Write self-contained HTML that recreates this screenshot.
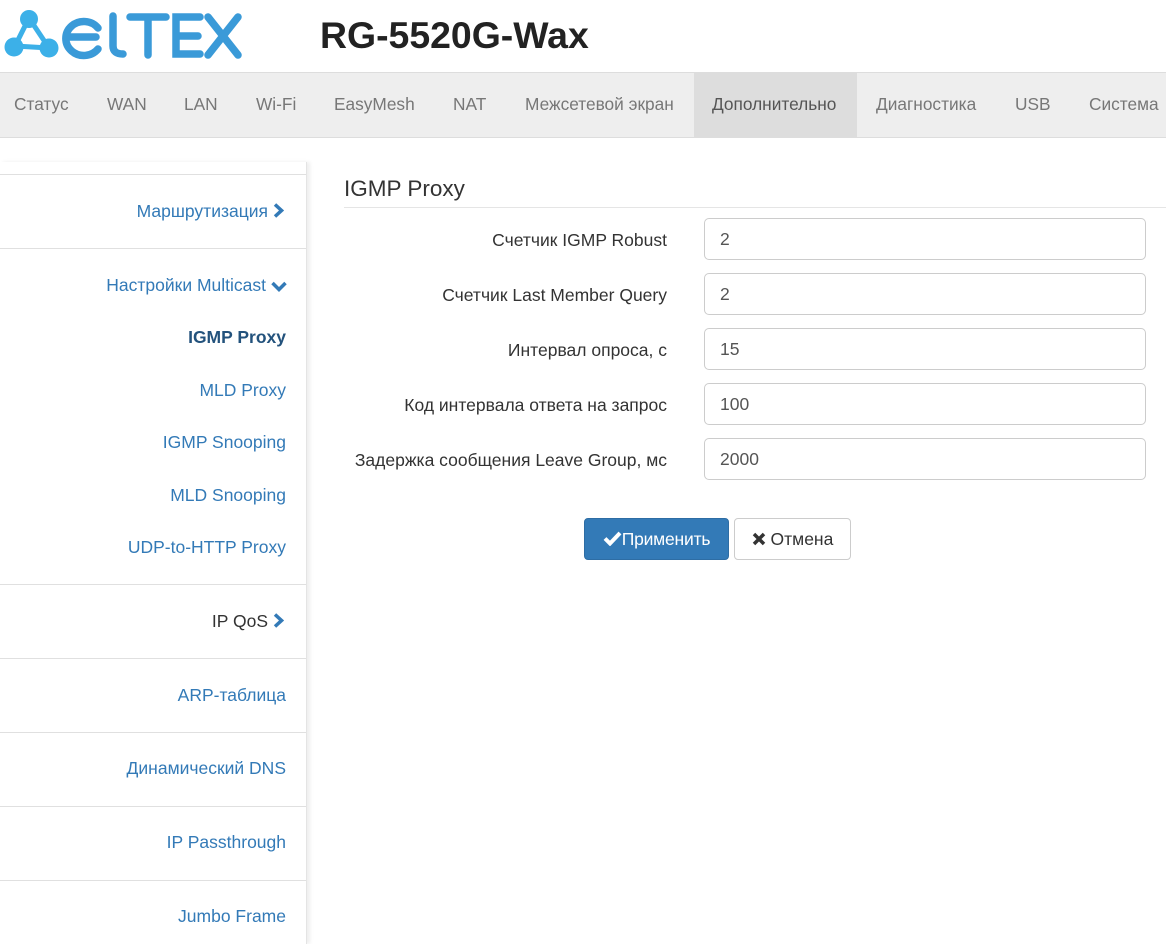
<!DOCTYPE html>
<html><head><meta charset="utf-8"><style>
*{box-sizing:border-box;margin:0;padding:0}
body{width:1166px;height:944px;overflow:hidden;background:#fff;font-family:"Liberation Sans",sans-serif;position:relative}
.hdr{height:73px;border-bottom:1px solid #ddd;position:relative}
.title{position:absolute;left:320px;top:14px;font-size:37.4px;font-weight:bold;color:#222}
.nav{position:absolute;top:73px;left:0;width:1166px;height:65px;background:#eee;border-bottom:1px solid #ddd}
.nav span{position:absolute;top:0;height:64px;line-height:63px;font-size:17.3px;color:#777}
.side{position:absolute;left:0;top:162px;width:307px;height:782px;border-right:1px solid #e4e4e4;box-shadow:3px 0 4px #eee}
.side .ln{position:absolute;left:0;width:306px;border-top:1px solid #e0e0e0}
.side a{position:absolute;right:19px;font-size:17.5px;color:#337ab7;text-decoration:none;white-space:nowrap}
.side a.b{color:#23527c;font-weight:bold}
.side svg{vertical-align:-1px;margin-left:5px}
h3{position:absolute;left:344px;top:176px;font-size:22.5px;font-weight:normal;color:#333}
.hl{position:absolute;left:344px;top:207px;width:822px;border-top:1px solid #e5e5e5}
.lab{position:absolute;right:499px;font-size:17.5px;color:#333}
.inp{position:absolute;left:704px;width:442px;height:42px;border:1px solid #ccc;border-radius:5px;padding-left:15px;line-height:40px;font-size:17.5px;color:#555}
.btn{position:absolute;top:518px;height:42px;border-radius:4px;font-size:17.5px;line-height:40px;text-align:center}
</style></head><body>
<div class="hdr">
<svg width="250" height="70" style="position:absolute;left:0;top:0">
<g stroke="#3cb0e8" stroke-width="5" fill="none"><line x1="29" y1="18" x2="15" y2="46"/><line x1="29" y1="18" x2="49" y2="48"/><line x1="15" y1="46" x2="49" y2="48"/></g>
<g fill="#3cb0e8"><circle cx="29" cy="19" r="9"/><circle cx="14" cy="47" r="9.5"/><circle cx="49" cy="48" r="9.5"/></g>
<g stroke="#3a9ad8" stroke-width="7.5" fill="none" stroke-linecap="round">
<path d="M98 28 A18 17 0 1 0 98 49 M70 37 H96"/>
<path d="M113 16 V46 Q113 54 123 54"/>
<path d="M130 17 H166 M148 17 V55"/>
<path d="M200 17 H176 V54 H200 M176 36 H198"/>
<path d="M208 17 L238 55 M238 17 L208 55"/>
</g></svg>
<div class="title">RG-5520G-Wax</div>
</div>
<div class="nav">
<div style="position:absolute;left:694px;top:0;width:163px;height:64px;background:#ddd"></div>
<span style="left:14px">Статус</span><span style="left:107px">WAN</span><span style="left:184px">LAN</span><span style="left:256px">Wi-Fi</span><span style="left:334px">EasyMesh</span><span style="left:453px">NAT</span><span style="left:525px">Межсетевой экран</span><span style="left:712px;color:#555">Дополнительно</span><span style="left:876px">Диагностика</span><span style="left:1015px">USB</span><span style="left:1089px">Система</span>
</div>
<div class="side">
<div class="ln" style="top:12px"></div><div class="ln" style="top:86px"></div><div class="ln" style="top:422px"></div><div class="ln" style="top:496px"></div><div class="ln" style="top:570px"></div><div class="ln" style="top:644px"></div><div class="ln" style="top:718px"></div>
<a style="top:39px;right:22px">Маршрутизация<svg width="11" height="15" viewBox="0 0 11 15"><path d="M2 1.5 L8.5 7.5 L2 13.5" stroke="#337ab7" stroke-width="3.5" fill="none"/></svg></a>
<a style="top:113px;right:19px">Настройки Multicast<svg width="16" height="11" viewBox="0 0 16 11"><path d="M1.5 2 L8 8.5 L14.5 2" stroke="#337ab7" stroke-width="3.5" fill="none"/></svg></a>
<a class="b" style="top:165px;right:20px">IGMP Proxy</a>
<a style="top:218px;right:20px">MLD Proxy</a>
<a style="top:270px;right:20px">IGMP Snooping</a>
<a style="top:323px;right:20px">MLD Snooping</a>
<a style="top:375px;right:20px">UDP-to-HTTP Proxy</a>
<a style="top:449px;right:22px;color:#333">IP QoS<svg width="11" height="15" viewBox="0 0 11 15"><path d="M2 1.5 L8.5 7.5 L2 13.5" stroke="#337ab7" stroke-width="3.5" fill="none"/></svg></a>
<a style="top:523px;right:20px">ARP-таблица</a>
<a style="top:596px;right:20px">Динамический DNS</a>
<a style="top:670px;right:20px">IP Passthrough</a>
<a style="top:744px;right:20px">Jumbo Frame</a>
</div>
<h3>IGMP Proxy</h3><div class="hl"></div>
<div class="lab" style="top:230px">Счетчик IGMP Robust</div><div class="inp" style="top:218px">2</div>
<div class="lab" style="top:285px">Счетчик Last Member Query</div><div class="inp" style="top:273px">2</div>
<div class="lab" style="top:340px">Интервал опроса, с</div><div class="inp" style="top:328px">15</div>
<div class="lab" style="top:395px">Код интервала ответа на запрос</div><div class="inp" style="top:383px">100</div>
<div class="lab" style="top:450px">Задержка сообщения Leave Group, мс</div><div class="inp" style="top:438px">2000</div>
<div class="btn" style="left:584px;width:145px;background:#337ab7;border:1px solid #2e6da4;color:#fff;letter-spacing:-0.2px"><svg width="19" height="15" viewBox="0 0 19 15" style="vertical-align:-1px"><path d="M2 7.5 L7 12.5 L17 2" stroke="#fff" stroke-width="4" fill="none"/></svg>Применить</div>
<div class="btn" style="left:734px;width:117px;background:#fff;border:1px solid #ccc;color:#333"><svg width="14" height="14" viewBox="0 0 14 14" style="vertical-align:-1px"><path d="M2 2 L12 12 M12 2 L2 12" stroke="#333" stroke-width="3.5" fill="none"/></svg> Отмена</div>
</body></html>
